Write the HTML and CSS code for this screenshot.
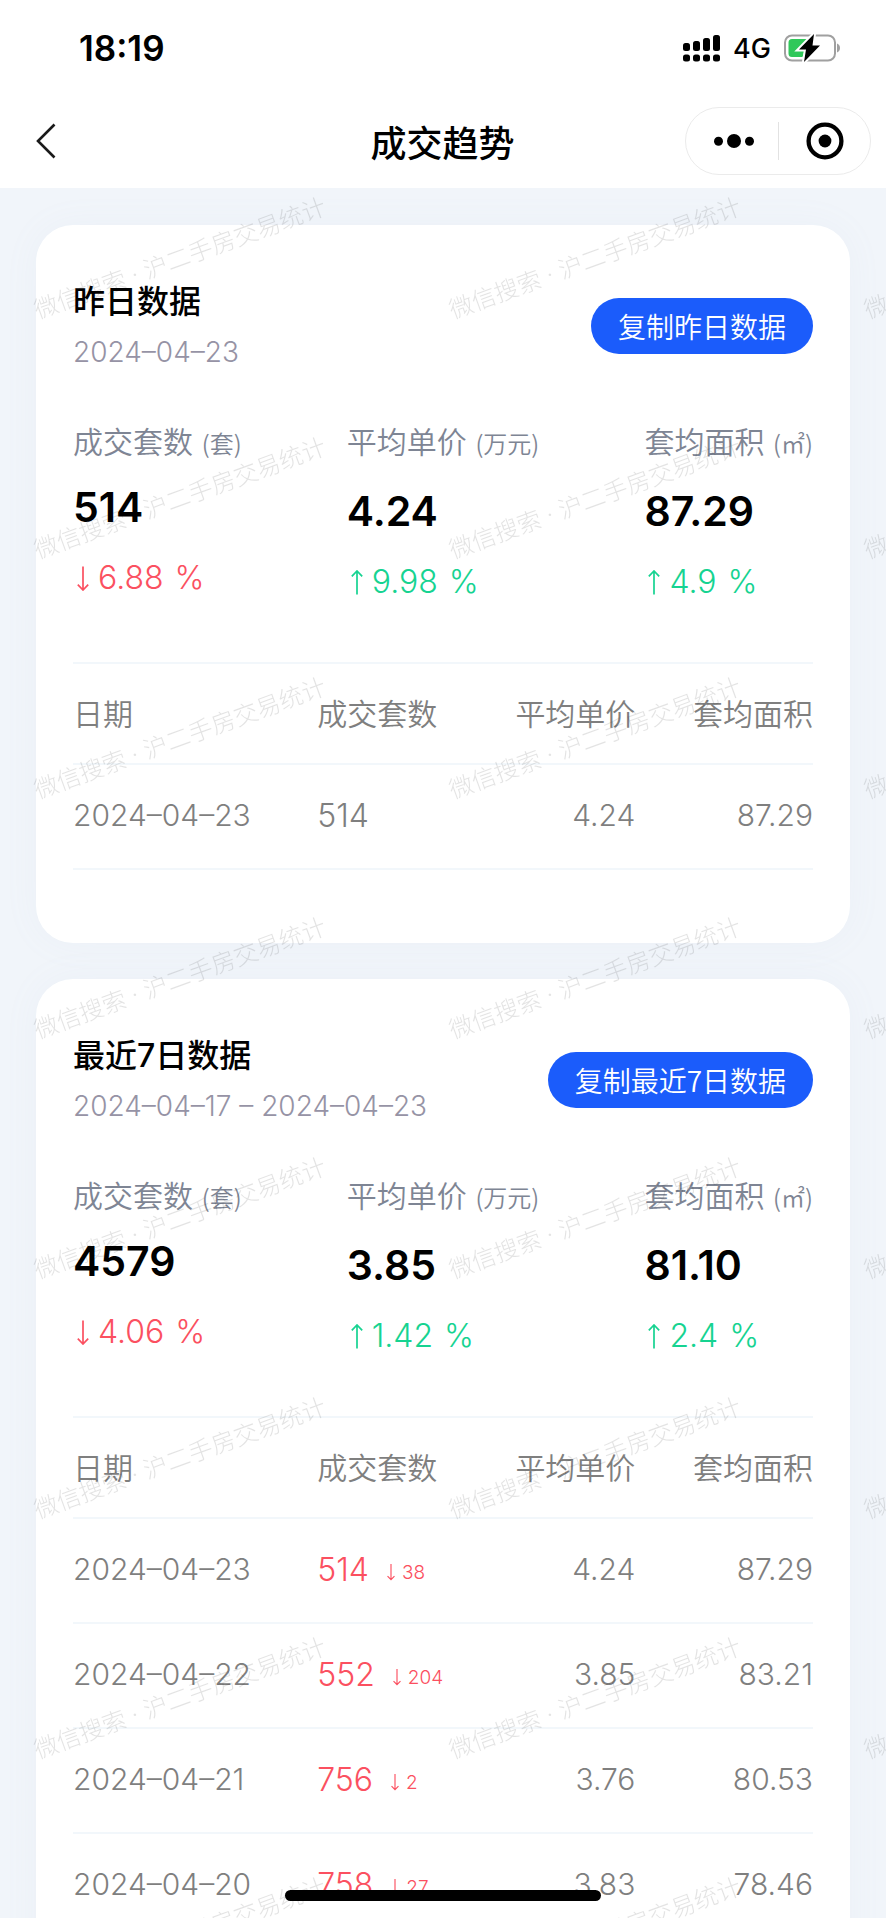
FILE: index.html
```html
<!DOCTYPE html>
<html lang="zh-CN">
<head>
<meta charset="utf-8">
<meta name="viewport" content="width=device-width, initial-scale=1">
<title>成交趋势</title>
<link rel="stylesheet" href="styles.css">
</head>
<body>
<svg class="sprite" aria-hidden="true">
  <symbol id="arrow-down" viewBox="0 0 12 25"><path d="M6 0.5V24M0.8 18.6L6 24L11.2 18.6" fill="none" stroke="currentColor" stroke-width="1.7"/></symbol>
  <symbol id="arrow-up" viewBox="0 0 12 25"><path d="M6 24.5V1M0.8 6.4L6 1L11.2 6.4" fill="none" stroke="currentColor" stroke-width="1.7"/></symbol>
</svg>
<div class="app">
  <header class="header">
    <div class="status">
      <time class="clock">18:19</time>
      <div class="status-icons">
        <svg width="37" height="27" viewBox="0 0 37 27" aria-label="信号">
          <rect x="0" y="8" width="7" height="8" rx="2.500"/><rect x="10" y="6" width="7" height="10" rx="2.500"/><rect x="20" y="3" width="7" height="13" rx="2.500"/><rect x="30" y="0" width="7" height="16" rx="2.500"/>
          <rect x="0" y="19.500" width="7" height="7" rx="2.500"/><rect x="10" y="19.500" width="7" height="7" rx="2.500"/><rect x="20" y="19.500" width="7" height="7" rx="2.500"/><rect x="30" y="19.500" width="7" height="7" rx="2.500"/>
        </svg>
        <span class="network">4G</span>
        <svg width="57" height="28" viewBox="0 0 57 28" aria-label="充电中">
          <rect x="1" y="1.5" width="50" height="25" rx="7" fill="none" stroke="#a0a0a0" stroke-width="2"/>
          <path d="M53 9.5C57 11 57 17 53 18.500Z" fill="#a0a0a0"/>
          <path d="M8 5H24L15 15.500H21L18.500 23H8Q4.500 23 4.500 19.500V8.500Q4.500 5 8 5Z" fill="#30c85a"/>
          <path d="M30 0L15 15.500H22L20 28L36 11.500H28.500Z" fill="#000" stroke="#fff" stroke-width="4" paint-order="stroke"/>
        </svg>
      </div>
    </div>
    <nav class="nav">
      <button class="back" aria-label="返回"><svg width="20" height="36" viewBox="0 0 20 36"><path d="M18.500 1.500L2 18L18.500 34.500" fill="none" stroke="#1a1a1a" stroke-width="2.600"/></svg></button>
      <h1 class="page-title">成交趋势</h1>
      <div class="capsule">
        <button class="capsule-btn capsule-more" aria-label="更多"><svg width="40" height="14" viewBox="0 0 40 14"><circle cx="4.500" cy="7.200" r="4.500"/><circle cx="20" cy="7" r="7"/><circle cx="35.500" cy="7.200" r="4.500"/></svg></button>
        <button class="capsule-btn" aria-label="关闭"><svg width="38" height="38" viewBox="0 0 38 38"><circle cx="19" cy="19" r="16.400" fill="none" stroke="#000" stroke-width="4.300"/><circle cx="19" cy="19" r="6.400"/></svg></button>
      </div>
    </nav>
  </header>

  <main class="content">
    <section class="card">
      <div class="card-head">
        <div>
          <h2 class="card-title">昨日数据</h2>
          <p class="card-date">2024–04–23</p>
        </div>
        <button class="copy">复制昨日数据</button>
      </div>
      <div class="metrics">
        <div class="metric metric-count">
          <p class="metric-label">成交套数 <small>(套)</small></p>
          <p class="metric-value">514</p>
          <p class="delta down"><svg class="arrow"><use href="#arrow-down"/></svg>6.88 <span class="unit">%</span></p>
        </div>
        <div class="metric">
          <p class="metric-label">平均单价 <small>(万元)</small></p>
          <p class="metric-value">4.24</p>
          <p class="delta up"><svg class="arrow"><use href="#arrow-up"/></svg>9.98 <span class="unit">%</span></p>
        </div>
        <div class="metric">
          <p class="metric-label">套均面积 <small>(㎡)</small></p>
          <p class="metric-value">87.29</p>
          <p class="delta up"><svg class="arrow"><use href="#arrow-up"/></svg>4.9 <span class="unit">%</span></p>
        </div>
      </div>
      <table class="table">
        <colgroup><col class="col-date"><col class="col-count"><col class="col-price"><col class="col-area"></colgroup>
        <thead><tr><th>日期</th><th>成交套数</th><th class="num">平均单价</th><th class="num">套均面积</th></tr></thead>
        <tbody><tr><td>2024–04–23</td><td class="count">514</td><td class="num">4.24</td><td class="num">87.29</td></tr></tbody>
      </table>
    </section>

    <section class="card">
      <div class="card-head">
        <div>
          <h2 class="card-title">最近7日数据</h2>
          <p class="card-date">2024–04–17 – 2024–04–23</p>
        </div>
        <button class="copy">复制最近7日数据</button>
      </div>
      <div class="metrics">
        <div class="metric metric-count">
          <p class="metric-label">成交套数 <small>(套)</small></p>
          <p class="metric-value">4579</p>
          <p class="delta down"><svg class="arrow"><use href="#arrow-down"/></svg>4.06 <span class="unit">%</span></p>
        </div>
        <div class="metric">
          <p class="metric-label">平均单价 <small>(万元)</small></p>
          <p class="metric-value">3.85</p>
          <p class="delta up"><svg class="arrow"><use href="#arrow-up"/></svg>1.42 <span class="unit">%</span></p>
        </div>
        <div class="metric">
          <p class="metric-label">套均面积 <small>(㎡)</small></p>
          <p class="metric-value">81.10</p>
          <p class="delta up"><svg class="arrow"><use href="#arrow-up"/></svg>2.4 <span class="unit">%</span></p>
        </div>
      </div>
      <table class="table">
        <colgroup><col class="col-date"><col class="col-count"><col class="col-price"><col class="col-area"></colgroup>
        <thead><tr><th>日期</th><th>成交套数</th><th class="num">平均单价</th><th class="num">套均面积</th></tr></thead>
        <tbody>
          <tr><td>2024–04–23</td><td class="count down">514<span class="change"><svg class="arrow-small"><use href="#arrow-down"/></svg>38</span></td><td class="num">4.24</td><td class="num">87.29</td></tr>
          <tr><td>2024–04–22</td><td class="count down">552<span class="change"><svg class="arrow-small"><use href="#arrow-down"/></svg>204</span></td><td class="num">3.85</td><td class="num">83.21</td></tr>
          <tr><td>2024–04–21</td><td class="count down">756<span class="change"><svg class="arrow-small"><use href="#arrow-down"/></svg>2</span></td><td class="num">3.76</td><td class="num">80.53</td></tr>
          <tr><td>2024–04–20</td><td class="count down">758<span class="change"><svg class="arrow-small"><use href="#arrow-down"/></svg>27</span></td><td class="num">3.83</td><td class="num">78.46</td></tr>
        </tbody>
      </table>
    </section>
  </main>

  <svg class="watermark" aria-hidden="true">
    <defs>
      <pattern id="mark" width="415" height="240" patternUnits="userSpaceOnUse">
        <text class="mark-text" transform="translate(38 131) rotate(-20)">微信搜索 · 沪二手房交易统计</text>
      </pattern>
    </defs>
    <rect width="100%" height="100%" fill="url(#mark)"/>
  </svg>
  <div class="home-bar"></div>
</div>
</body>
</html>
```
FILE: styles.css
```css
* { box-sizing: border-box; }

body,
h1,
h2,
p { margin: 0; }

body {
  font-family: Inter, "Noto Sans CJK SC", sans-serif;
  font-weight: 350;
  color: #000;
  background: #f1f5fa;
}

button {
  padding: 0;
  border: 0;
  background: none;
  font: inherit;
  color: inherit;
}

svg { display: block; }

.sprite {
  position: absolute;
  width: 0;
  height: 0;
}

.app {
  position: relative;
  display: flex;
  flex-direction: column;
  height: 100vh;
  overflow: hidden;
}

/* Header */
.header {
  flex: none;
  background: #fff;
}

.status {
  display: flex;
  justify-content: space-between;
  align-items: center;
  height: 94px;
  padding: 2px 45px 0 79px;
}

.clock {
  font-size: 35px;
  font-weight: 600;
}

.status-icons {
  display: flex;
  align-items: center;
  gap: 13px;
}

.network {
  font-size: 27px;
  font-weight: 450;
}

.nav {
  display: grid;
  grid-template-columns: 1fr auto 1fr;
  align-items: center;
  height: 94px;
  padding: 0 15px 0 36px;
}

.back { justify-self: start; }

.page-title {
  font-size: 36px;
  font-weight: 500;
  margin-right: 22px;
}

.capsule {
  justify-self: end;
  display: flex;
  width: 186px;
  height: 68px;
  padding: 14px 0;
  border: 1px solid #ebebeb;
  border-radius: 34px;
}

.capsule-btn {
  width: 50%;
  display: flex;
  align-items: center;
  justify-content: center;
}

.capsule-more { padding-left: 4px; }

.capsule-btn + .capsule-btn { border-left: 1px solid #e2e2e2; }

/* Cards */
.content {
  flex: 1;
  min-height: 0;
  padding: 37px 36px;
  overflow-y: auto;
  scrollbar-width: none;
}

.card {
  padding: 55px 37px 73px;
  border-radius: 37px;
  background: #fff;
  box-shadow: 0 0 36px rgba(150, 175, 200, 0.06);
}

.card + .card { margin-top: 36px; }

.card-head {
  display: flex;
  justify-content: space-between;
  align-items: center;
}

.card-title {
  font-size: 32px;
  font-weight: 500;
  line-height: 44px;
}

.card-date {
  margin-top: 8px;
  font-size: 28px;
  line-height: 40px;
  color: #9693a5;
}

.copy {
  height: 56px;
  padding: 0 27px;
  border-radius: 28px;
  background: #1b5cfb;
  font-family: "Noto Sans CJK SC", sans-serif;
  font-size: 28px;
  color: #fff;
}

.metrics {
  display: flex;
  justify-content: space-between;
  margin: 48px 0 60px;
}

.metric-label {
  font-family: "Noto Sans CJK SC", sans-serif;
  font-size: 30px;
  line-height: 40px;
  color: #7e8594;
}

.metric-label small {
  margin-left: 2px;
  font-size: 24px;
  line-height: 24px;
}

.metric-value {
  margin-top: 20px;
  font-size: 41px;
  font-weight: 600;
  line-height: 62px;
}

.metric-count .metric-value { margin-top: 16px; }

.delta {
  display: flex;
  align-items: center;
  gap: 9px;
  margin-top: 20px;
  padding-left: 4px;
  font-size: 32px;
  line-height: 40px;
}

.unit { padding-left: 2px; }

.down { color: #fb5060; }
.up { color: #16d391; }

.arrow {
  width: 12px;
  height: 25px;
}

/* Tables */
.table {
  width: 100%;
  table-layout: fixed;
  border-spacing: 0;
  border-top: 2px solid #f2f7fb;
  color: #7f7f7f;
}

.col-date { width: 33%; }
.col-count { width: 20%; }
.col-price { width: 23%; }
.col-area { width: 24%; }

.table th,
.table td {
  padding: 0 0 4px;
  border-bottom: 2px solid #f2f7fb;
  text-align: left;
  white-space: nowrap;
}

.table th {
  height: 101px;
  font-size: 30px;
  font-weight: 350;
}

.table td {
  height: 105px;
  font-size: 30px;
}

.table .num { text-align: right; }

.table .count {
  padding-bottom: 2px;
  font-size: 32px;
}

.table .down { color: #fb5060; }

.change {
  display: inline-flex;
  align-items: center;
  gap: 7px;
  margin-left: 18px;
  font-size: 19px;
}

.arrow-small {
  width: 8px;
  height: 18px;
}

/* Overlays */
.watermark {
  position: absolute;
  inset: 188px 0 0;
  width: 100%;
  height: calc(100% - 188px);
  pointer-events: none;
}

.mark-text {
  font-family: Inter, "Noto Sans CJK SC", sans-serif;
  font-size: 24px;
  font-weight: 300;
  fill: rgba(0, 0, 0, 0.11);
}

.home-bar {
  position: absolute;
  bottom: 17px;
  left: 50%;
  width: 316px;
  height: 11px;
  border-radius: 6px;
  background: #000;
  transform: translateX(-50%);
}
```
